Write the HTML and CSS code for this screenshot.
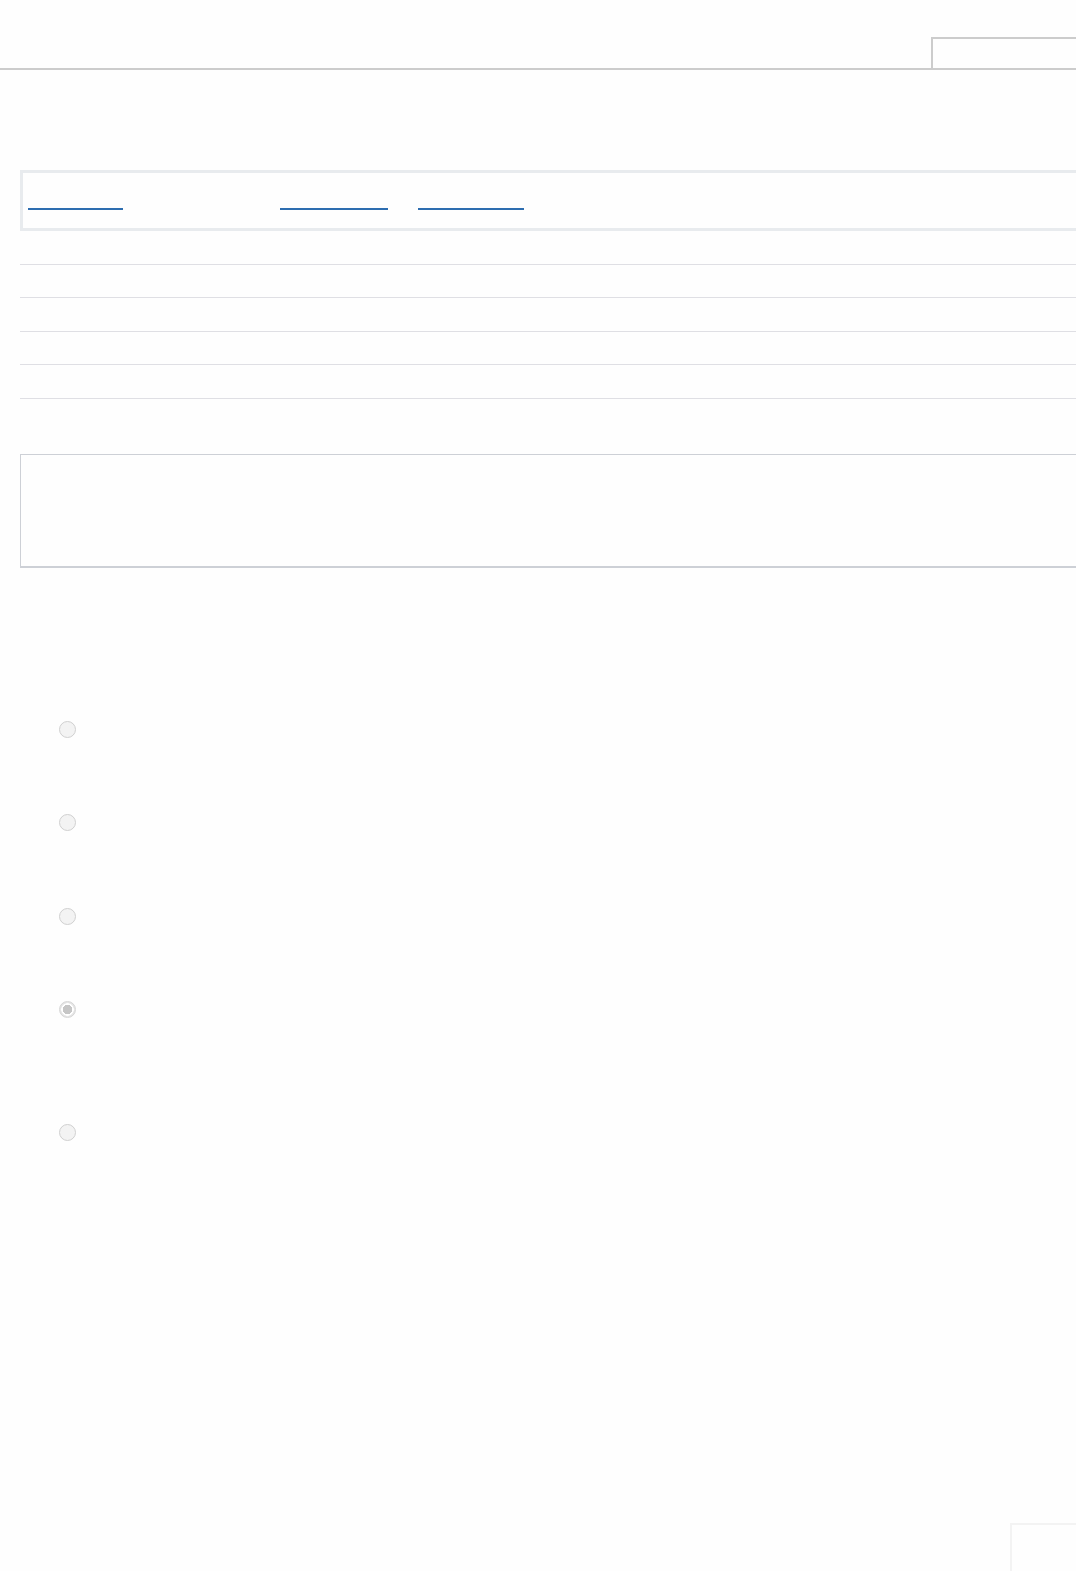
FILE: index.html
```html
<!DOCTYPE html>
<html lang="en">

<head>
    <meta charset="UTF-8">
    <meta name="viewport" content="width=device-width, initial-scale=1.0">
    <title>Survey</title>
    <link rel="stylesheet" href="styles.css">
</head>

<body>
    <header class="top-bar">
        <div class="tab"></div>
    </header>

    <main class="content">
        <nav class="link-box">
            <a class="link link-first" href="#"></a>
            <a class="link link-second" href="#"></a>
            <a class="link link-third" href="#"></a>
        </nav>

        <div class="rows">
            <div class="row"></div>
            <div class="row"></div>
            <div class="row"></div>
            <div class="row"></div>
            <div class="row"></div>
        </div>

        <div class="note-box"></div>

        <form class="choices">
            <label class="choice"><input type="radio" name="pick"></label>
            <label class="choice"><input type="radio" name="pick"></label>
            <label class="choice"><input type="radio" name="pick"></label>
            <label class="choice choice-tall"><input type="radio" name="pick" checked></label>
            <label class="choice"><input type="radio" name="pick"></label>
        </form>
    </main>

    <div class="corner-btn"></div>
</body>

</html>
```

FILE: styles.css
```css
html,
body {
    overflow-x: hidden;
}

body {
    font-family: "Liberation Sans", Arial, sans-serif;
    margin: 0;
    padding: 0;
    background-color: #fefefe;
}

.top-bar {
    height: 68px;
    border-bottom: 2px solid #cccccc;
    display: flex;
    justify-content: flex-end;
    align-items: flex-end;
}

.tab {
    width: 143px;
    height: 29px;
    border-top: 2px solid #cccccc;
    border-left: 2px solid #cccccc;
}

.content {
    padding-left: 20px;
    width: 1100px;
}

.link-box {
    margin-top: 100px;
    height: 61px;
    border: 3px solid #e8ebee;
    border-right: none;
    display: flex;
    align-items: flex-start;
    padding-top: 34px;
    box-sizing: border-box;
}

.link {
    display: block;
    height: 1px;
    border-bottom: 2px solid #2d6db0;
}

.link-first {
    margin-left: 5px;
    width: 95px;
}

.link-second {
    margin-left: 157px;
    width: 108px;
}

.link-third {
    margin-left: 30px;
    width: 106px;
}

.row {
    height: 32.5px;
    border-bottom: 1px solid #dfdfe4;
}

.note-box {
    margin-top: 55px;
    height: 111px;
    border-top: 1px solid #cdd0d6;
    border-left: 1px solid #cdd0d6;
    border-bottom: 2px solid #cdd0d6;
}

.choices {
    margin-top: 153px;
    padding-left: 39px;
}

.choice {
    display: block;
    height: 93.5px;
}

.choice-tall {
    height: 123px;
}

.choice input {
    appearance: none;
    -webkit-appearance: none;
    margin: 0;
    width: 17px;
    height: 17px;
    border-radius: 50%;
    border: 1px solid #d0d0d0;
    background-color: #f3f3f3;
    box-sizing: border-box;
    display: block;
}

.choice input:checked {
    background: radial-gradient(circle, #c6c6c6 0 4.5px, #ffffff 5px 6px, #e6e6e6 6.5px);
    border-color: #d6d6d6;
}

.corner-btn {
    position: fixed;
    right: -10px;
    bottom: -10px;
    width: 72px;
    height: 54px;
    border: 2px solid #f3f3f3;
}
```
